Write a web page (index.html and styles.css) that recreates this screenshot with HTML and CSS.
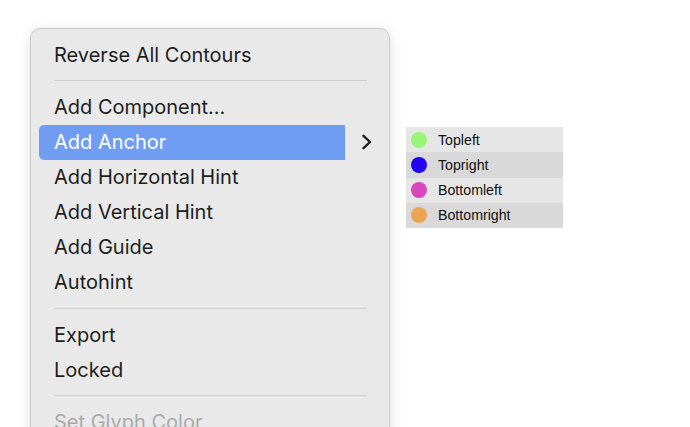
FILE: index.html
```html
<!DOCTYPE html>
<html>
<head>
<meta charset="utf-8">
<link rel="stylesheet" href="styles.css">
</head>
<body>
<div class="stage">
  <div class="menu">
    <div class="item">Reverse All Contours</div>
    <div class="sep"></div>
    <div class="item">Add Component…</div>
    <div class="item active">
      <span class="hl">Add Anchor</span>
      <svg class="chev" width="12" height="16" viewBox="0 0 12 16"><path d="M2.5 1.8 L9 8 L2.5 14.2" fill="none" stroke="#1f1f1f" stroke-width="2.4" stroke-linecap="round" stroke-linejoin="round"/></svg>
    </div>
    <div class="item">Add Horizontal Hint</div>
    <div class="item">Add Vertical Hint</div>
    <div class="item">Add Guide</div>
    <div class="item">Autohint</div>
    <div class="sep"></div>
    <div class="item">Export</div>
    <div class="item">Locked</div>
    <div class="sep"></div>
    <div class="item disabled">Set Glyph Color</div>
  </div>
  <div class="submenu">
    <div class="srow"><span class="dot green"></span>Topleft</div>
    <div class="srow alt"><span class="dot blue"></span>Topright</div>
    <div class="srow"><span class="dot magenta"></span>Bottomleft</div>
    <div class="srow alt"><span class="dot orange"></span>Bottomright</div>
  </div>
</div>
</body>
</html>
```
FILE: styles.css
```css
html, body {
  margin: 0;
  padding: 0;
  background: #ffffff;
  overflow: hidden;
}
.stage {
  width: 690px;
  height: 427px;
  overflow: hidden;
  display: flex;
  align-items: flex-start;
  padding: 28px 0 0 30px;
  box-sizing: border-box;
}
.menu {
  width: 360px;
  height: 440px;
  box-sizing: border-box;
  background: #e9e9e9;
  border: 1px solid #cacaca;
  border-radius: 10px;
  box-shadow: 0 3px 14px rgba(0, 0, 0, 0.13);
  padding: 8px 0 0 8px;
  font-family: Inter, "Noto Sans", sans-serif;
  font-size: 20px;
  color: #1d1d1d;
  flex-shrink: 0;
}
.item {
  height: 35px;
  display: flex;
  align-items: center;
  padding-left: 15px;
}
.item.active {
  padding-left: 0;
}
.hl {
  width: 306px;
  height: 35px;
  box-sizing: border-box;
  padding-left: 15px;
  display: flex;
  align-items: center;
  background: #6f9df2;
  color: #ffffff;
  border-radius: 5px 0 0 5px;
}
.chev {
  margin-left: 16px;
}
.disabled {
  color: #a9a9a9;
}
.sep {
  height: 1px;
  background: #cfcfcf;
  margin: 8px 22px 8.5px 15px;
}
.submenu {
  margin: 99px 0 0 16px;
  width: 157px;
  font-family: "Liberation Sans", Arial, sans-serif;
  font-size: 14.2px;
  color: #111111;
}
.srow {
  height: 25.25px;
  display: flex;
  align-items: center;
  background: #e6e6e6;
}
.srow.alt {
  background: #d9d9d9;
}
.dot {
  width: 16px;
  height: 16px;
  border-radius: 50%;
  margin: 0 11px 0 5px;
}
.green { background: #97f677; }
.blue { background: #2300ef; }
.magenta { background: #d848bd; }
.orange { background: #eba552; }
```
